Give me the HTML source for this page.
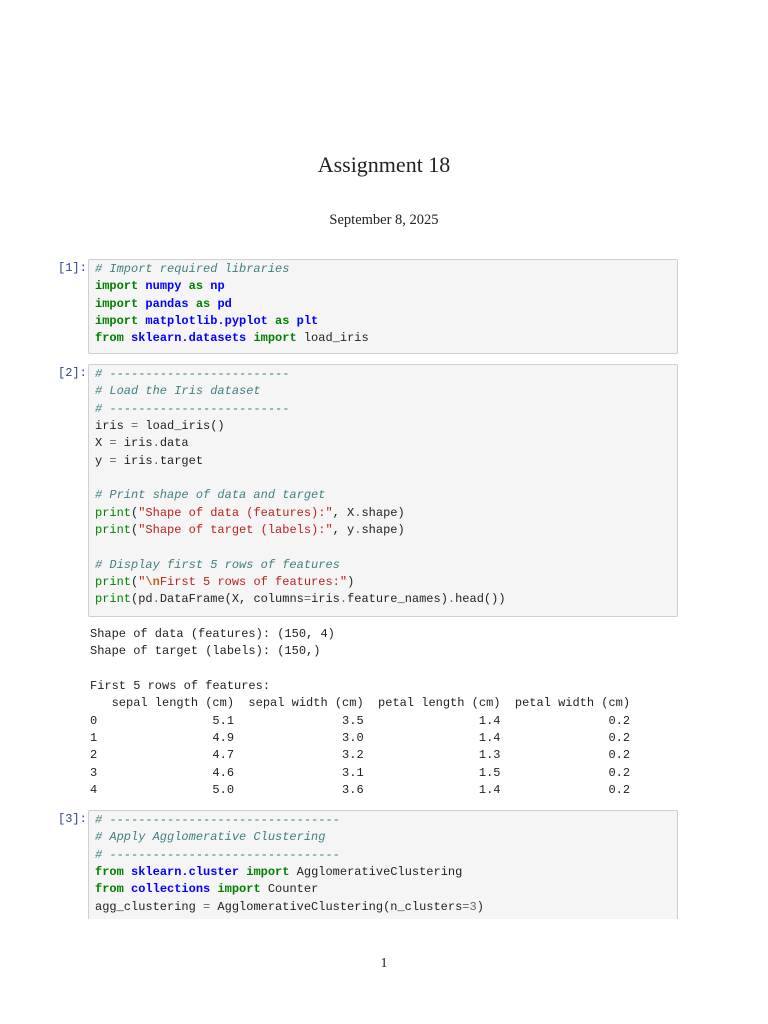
<!DOCTYPE html>
<html><head><meta charset="utf-8"><style>
body{margin:0;width:768px;height:1024px;background:#fff;position:relative;overflow:hidden;font-family:"Liberation Serif",serif;color:#222}
.t{position:absolute;left:0;width:768px;text-align:center}
.box{position:absolute;left:88px;width:590px;background:#f5f5f5;border:1px solid #cfcfcf;border-radius:2px;box-sizing:border-box}
pre{margin:0;font-family:"Liberation Mono",monospace;font-size:12px;line-height:17.35px;color:#222}
.code{position:absolute;left:95px}
.p{position:absolute;left:58px;font-family:"Liberation Mono",monospace;font-size:12px;color:#303f9f}
.c{color:#408080;font-style:italic}
.k{color:#008000;font-weight:bold}
.b{color:#0000ff;font-weight:bold}
.g{color:#008000}
.s{color:#ba2121}
.e{color:#bb6622;font-weight:bold}
.n{color:#666}
</style></head><body>
<div class="t" style="top:152px;font-size:22px">Assignment 18</div>
<div class="t" style="top:212px;font-size:14.5px">September 8, 2025</div>

<div class="p" style="top:261px">[1]:</div>
<div class="box" style="top:259px;height:95px"></div>
<pre class="code" style="top:261px"><span class="c"># Import required libraries</span>
<span class="k">import</span> <span class="b">numpy</span> <span class="k">as</span> <span class="b">np</span>
<span class="k">import</span> <span class="b">pandas</span> <span class="k">as</span> <span class="b">pd</span>
<span class="k">import</span> <span class="b">matplotlib.pyplot</span> <span class="k">as</span> <span class="b">plt</span>
<span class="k">from</span> <span class="b">sklearn.datasets</span> <span class="k">import</span> load_iris</pre>

<div class="p" style="top:366px">[2]:</div>
<div class="box" style="top:364px;height:253px"></div>
<pre class="code" style="top:366px"><span class="c"># -------------------------</span>
<span class="c"># Load the Iris dataset</span>
<span class="c"># -------------------------</span>
iris <span class="n">=</span> load_iris()
X <span class="n">=</span> iris<span class="n">.</span>data
y <span class="n">=</span> iris<span class="n">.</span>target

<span class="c"># Print shape of data and target</span>
<span class="g">print</span>(<span class="s">"Shape of data (features):"</span>, X<span class="n">.</span>shape)
<span class="g">print</span>(<span class="s">"Shape of target (labels):"</span>, y<span class="n">.</span>shape)

<span class="c"># Display first 5 rows of features</span>
<span class="g">print</span>(<span class="s">"</span><span class="e">\n</span><span class="s">First 5 rows of features:"</span>)
<span class="g">print</span>(pd<span class="n">.</span>DataFrame(X, columns<span class="n">=</span>iris<span class="n">.</span>feature_names)<span class="n">.</span>head())</pre>

<pre style="position:absolute;left:90px;top:626px">Shape of data (features): (150, 4)
Shape of target (labels): (150,)

First 5 rows of features:
   sepal length (cm)  sepal width (cm)  petal length (cm)  petal width (cm)
0                5.1               3.5                1.4               0.2
1                4.9               3.0                1.4               0.2
2                4.7               3.2                1.3               0.2
3                4.6               3.1                1.5               0.2
4                5.0               3.6                1.4               0.2</pre>

<div class="p" style="top:812px">[3]:</div>
<div class="box" style="top:810px;height:130px;border-bottom:none"></div>
<div style="position:absolute;left:80px;top:919px;width:620px;height:30px;background:#fff"></div>
<pre class="code" style="top:812px"><span class="c"># --------------------------------</span>
<span class="c"># Apply Agglomerative Clustering</span>
<span class="c"># --------------------------------</span>
<span class="k">from</span> <span class="b">sklearn.cluster</span> <span class="k">import</span> AgglomerativeClustering
<span class="k">from</span> <span class="b">collections</span> <span class="k">import</span> Counter
agg_clustering <span class="n">=</span> AgglomerativeClustering(n_clusters<span class="n">=3</span>)</pre>

<div class="t" style="top:956px;font-size:14px">1</div>
</body></html>
